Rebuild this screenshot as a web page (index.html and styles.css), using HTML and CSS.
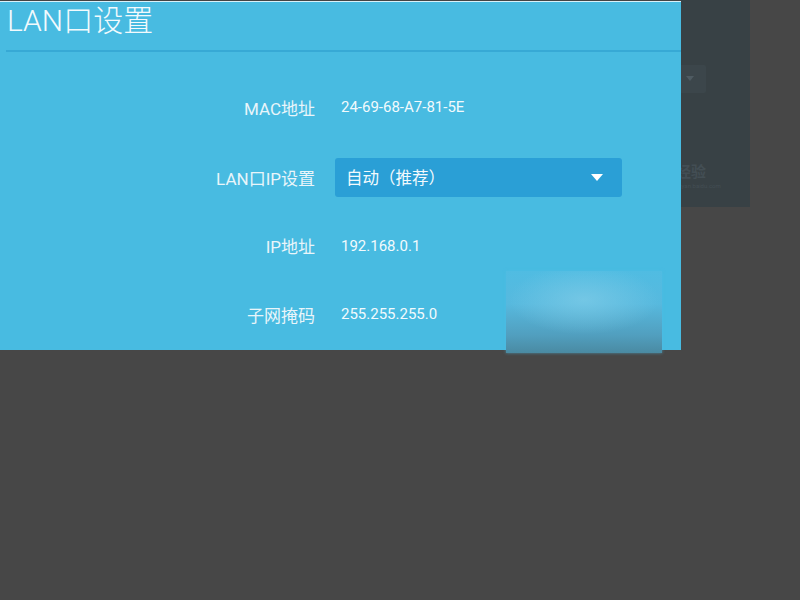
FILE: index.html
```html
<!DOCTYPE html>
<html lang="zh-CN">
<head>
  <meta charset="UTF-8">
  <meta name="viewport" content="width=device-width, initial-scale=1.0">
  <title>LAN口设置</title>
  <link rel="stylesheet" href="styles.css">
</head>
<body>
  <div class="stage">
    <!-- window behind the dialog -->
    <div class="window">
      <div class="window-select"><span class="window-arrow"></span></div>
      <div class="watermark">
        <div class="watermark-name">经验</div>
        <div class="watermark-url">jingyan.baidu.com</div>
      </div>
    </div>

    <div class="dialog">
      <h1 class="dialog-title">LAN口设置</h1>
      <div class="divider"></div>

      <div class="form">
        <div class="form-row">
          <div class="form-label">MAC地址</div>
          <div class="form-value">24-69-68-A7-81-5E</div>
        </div>
        <div class="form-row">
          <div class="form-label">LAN口IP设置</div>
          <div class="select">
            <span>自动（推荐）</span>
            <span class="select-arrow"></span>
          </div>
        </div>
        <div class="form-row">
          <div class="form-label">IP地址</div>
          <div class="form-value">192.168.0.1</div>
        </div>
        <div class="form-row">
          <div class="form-label">子网掩码</div>
          <div class="form-value">255.255.255.0</div>
        </div>
      </div>

      <div class="blur-patch"></div>
    </div>
  </div>
</body>
</html>
```

FILE: styles.css
```css
body {
  margin: 0;
  background-color: #474747;
  font-family: Roboto, "Noto Sans CJK SC", sans-serif;
}
.stage {
  position: relative;
  height: 600px;
}
.window {
  position: absolute;
  top: 0;
  left: 0;
  width: 750px;
  height: 207px;
  background-color: #384145;
  box-sizing: border-box;
  padding: 65px 44px 0 0;
  display: flex;
  flex-direction: column;
  align-items: flex-end;
}
.window-select {
  width: 120px;
  height: 28px;
  background-color: #3c464b;
  border-radius: 2px;
  position: relative;
}
.window-arrow {
  position: absolute;
  right: 12px;
  top: 11px;
  border-left: 4px solid transparent;
  border-right: 4px solid transparent;
  border-top: 5px solid #4f5b62;
}
.watermark {
  margin-top: 70px;
  margin-right: -14px;
  color: #434e54;
  width: 56px;
}
.watermark-name {
  font-size: 15px;
  line-height: 18px;
  font-weight: bold;
  padding-left: 12px;
}
.watermark-url {
  font-size: 6px;
  line-height: 10px;
  padding-left: 8px;
  white-space: nowrap;
}
.dialog {
  position: relative;
  width: 681px;
  height: 350px;
  background-color: #48bbe1;
  border-top: 1px solid #444;
  box-shadow: inset 0 1px 0 #d8f1fa;
  box-sizing: border-box;
  color: #eef8fc;
}
.dialog-title {
  margin: 0;
  height: 49px;
  padding: 0 7px;
  font-size: 30px;
  font-weight: 300;
  line-height: 40px;
  color: #f2fafd;
}
.divider {
  height: 2px;
  margin-left: 6px;
  background-color: #37a9d5;
}
.form {
  padding-top: 20px;
}
.form-row {
  display: grid;
  grid-template-columns: 315px 1fr;
  column-gap: 20px;
  align-items: center;
  height: 70px;
}
.form-row:nth-child(3) {
  height: 67px;
}
.form-label {
  text-align: right;
  font-size: 17px;
  color: #e9f5fa;
}
.form-value {
  padding-left: 6px;
  font-size: 15px;
  color: #f2fafd;
}
.select {
  width: 287px;
  height: 39px;
  box-sizing: border-box;
  padding: 0 19px 0 11px;
  background-color: #2a9fd6;
  border-radius: 3px;
  display: flex;
  align-items: center;
  justify-content: space-between;
  font-size: 16.5px;
  color: #f2fafd;
}
.select-arrow {
  border-left: 6px solid transparent;
  border-right: 6px solid transparent;
  border-top: 7px solid #ffffff;
}
.blur-patch {
  position: absolute;
  left: 506px;
  top: 270px;
  width: 156px;
  height: 82px;
  background:
    radial-gradient(ellipse 75px 35px at 50% 35%, rgba(125, 203, 231, 0.75), rgba(125, 203, 231, 0) 100%),
    linear-gradient(to bottom, #50bce2 0%, #57b9de 40%, #519fbf 78%, #4a8aa2 100%);
  box-shadow: 0 0 3px rgba(80, 190, 228, 0.6);
}
```
